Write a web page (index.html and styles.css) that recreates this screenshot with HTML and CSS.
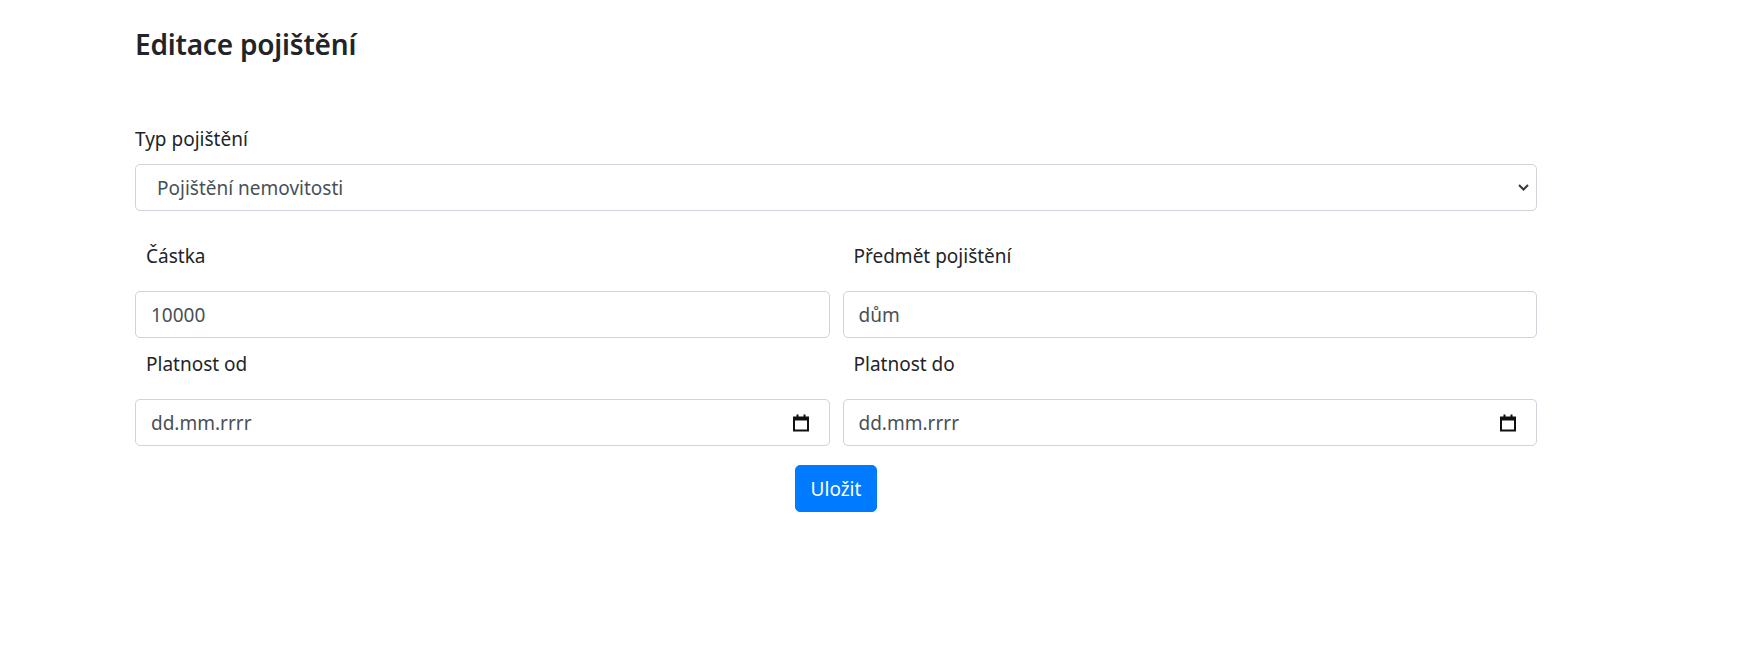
FILE: index.html
```html
<!DOCTYPE html>
<html lang="cs">
<head>
<meta charset="utf-8">
<title>Editace pojištění</title>
<link rel="stylesheet" href="styles.css">
</head>
<body>
<main class="page">
  <h1 class="title">Editace pojištění</h1>
  <form class="form">
    <div class="group">
      <label class="label-top" for="typ">Typ pojištění</label>
      <div class="select-wrap">
        <select id="typ" class="control select">
          <option>Pojištění nemovitosti</option>
        </select>
        <svg class="chevron" width="11" height="7" viewBox="0 0 11 7"><path d="M1 1 L5.5 5.5 L10 1" fill="none" stroke="#343a40" stroke-width="2"/></svg>
      </div>
    </div>
    <div class="grid">
      <div class="col">
        <label class="label-col" for="castka">Částka</label>
        <input id="castka" class="control" type="text" value="10000">
      </div>
      <div class="col">
        <label class="label-col" for="predmet">Předmět pojištění</label>
        <input id="predmet" class="control" type="text" value="dům">
      </div>
      <div class="col">
        <label class="label-col">Platnost od</label>
        <div class="control date">
          <span>dd.mm.rrrr</span>
          <svg class="cal" width="16" height="18" viewBox="0 0 16 18"><rect x="1" y="3.5" width="14" height="13" fill="none" stroke="#111" stroke-width="2"/><rect x="1" y="3.5" width="14" height="3" fill="#111"/><rect x="3.5" y="0.5" width="2" height="4" fill="#111"/><rect x="10.5" y="0.5" width="2" height="4" fill="#111"/></svg>
        </div>
      </div>
      <div class="col">
        <label class="label-col">Platnost do</label>
        <div class="control date">
          <span>dd.mm.rrrr</span>
          <svg class="cal" width="16" height="18" viewBox="0 0 16 18"><rect x="1" y="3.5" width="14" height="13" fill="none" stroke="#111" stroke-width="2"/><rect x="1" y="3.5" width="14" height="3" fill="#111"/><rect x="3.5" y="0.5" width="2" height="4" fill="#111"/><rect x="10.5" y="0.5" width="2" height="4" fill="#111"/></svg>
        </div>
      </div>
    </div>
    <div class="actions">
      <button type="button" class="btn">Uložit</button>
    </div>
  </form>
</main>
</body>
</html>
```

FILE: styles.css
```css
* { box-sizing: border-box; }
body {
  margin: 0;
  background: #fff;
  color: #212529;
  font-family: "Noto Sans", "Open Sans", sans-serif;
  font-size: 19px;
}
.page {
  width: 1537px;
  padding-left: 135px;
}
.title {
  margin: 26px 0 0 0;
  font-size: 28px;
  line-height: 36px;
  font-weight: 600;
  letter-spacing: -0.2px;
}
.form {
  margin-top: 62px;
}
.group {
  margin-bottom: 19px;
}
.label-top {
  display: block;
  line-height: 30px;
  margin-bottom: 10px;
}
.select-wrap {
  position: relative;
}
.control {
  display: block;
  width: 100%;
  height: 47px;
  border: 1px solid #ced4da;
  border-radius: 5px;
  background: #fff;
  color: #495057;
  font: inherit;
  padding: 0 15px;
  outline: none;
}
.select {
  appearance: none;
  -webkit-appearance: none;
  padding-left: 21px;
}
.chevron {
  position: absolute;
  right: 8px;
  top: 20px;
}
.grid {
  display: grid;
  grid-template-columns: 1fr 1fr;
  column-gap: 13px;
}
.label-col {
  display: block;
  line-height: 30px;
  padding: 11px 11px 20px;
}
.date {
  display: flex;
  align-items: center;
  justify-content: space-between;
  padding-right: 20px;
}
.actions {
  display: flex;
  justify-content: center;
  margin-top: 19px;
}
.btn {
  font: inherit;
  color: #fff;
  background: #007bff;
  border: 1px solid #007bff;
  border-radius: 5px;
  height: 47px;
  padding: 0 15px;
}
```
